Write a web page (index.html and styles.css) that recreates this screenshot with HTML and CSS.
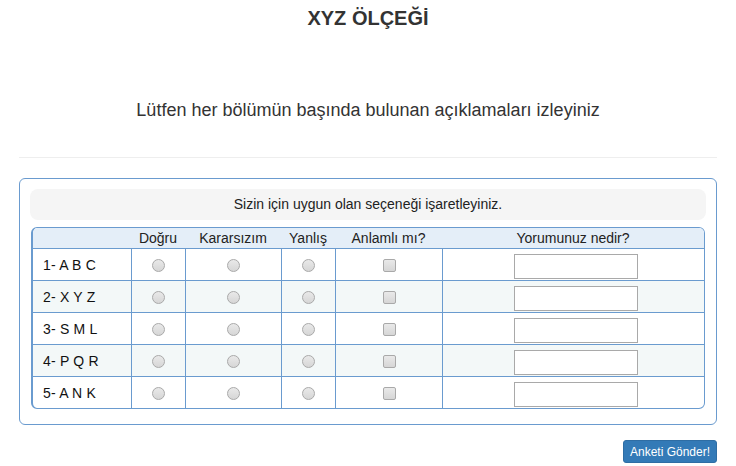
FILE: index.html
```html
<!DOCTYPE html>
<html lang="tr">
<head>
    <meta charset="UTF-8">
    <meta name="viewport" content="width=device-width, initial-scale=1.0">
    <title>XYZ Ölçeği</title>
    <link rel="stylesheet" href="styles.css">
</head>
<body>
    <div class="page">
        <h1 class="title">XYZ ÖLÇEĞİ</h1>
        <p class="intro">Lütfen her bölümün başında bulunan açıklamaları izleyiniz</p>
        <hr class="divider">

        <form class="survey">
            <div class="panel">
                <div class="panel-note">Sizin için uygun olan seçeneği işaretleyiniz.</div>
                <table class="scale">
                    <thead>
                        <tr>
                            <th class="col-label"></th>
                            <th class="col-dogru">Doğru</th>
                            <th class="col-kararsiz">Kararsızım</th>
                            <th class="col-yanlis">Yanlış</th>
                            <th class="col-anlamli">Anlamlı mı?</th>
                            <th class="col-yorum">Yorumunuz nedir?</th>
                        </tr>
                    </thead>
                    <tbody>
                        <tr>
                            <td class="item">1- A B C</td>
                            <td><input type="radio" name="s1"></td>
                            <td><input type="radio" name="s1"></td>
                            <td><input type="radio" name="s1"></td>
                            <td><input type="checkbox"></td>
                            <td class="comment"><input type="text"></td>
                        </tr>
                        <tr>
                            <td class="item">2- X Y Z</td>
                            <td><input type="radio" name="s2"></td>
                            <td><input type="radio" name="s2"></td>
                            <td><input type="radio" name="s2"></td>
                            <td><input type="checkbox"></td>
                            <td class="comment"><input type="text"></td>
                        </tr>
                        <tr>
                            <td class="item">3- S M L</td>
                            <td><input type="radio" name="s3"></td>
                            <td><input type="radio" name="s3"></td>
                            <td><input type="radio" name="s3"></td>
                            <td><input type="checkbox"></td>
                            <td class="comment"><input type="text"></td>
                        </tr>
                        <tr>
                            <td class="item">4- P Q R</td>
                            <td><input type="radio" name="s4"></td>
                            <td><input type="radio" name="s4"></td>
                            <td><input type="radio" name="s4"></td>
                            <td><input type="checkbox"></td>
                            <td class="comment"><input type="text"></td>
                        </tr>
                        <tr>
                            <td class="item">5- A N K</td>
                            <td><input type="radio" name="s5"></td>
                            <td><input type="radio" name="s5"></td>
                            <td><input type="radio" name="s5"></td>
                            <td><input type="checkbox"></td>
                            <td class="comment"><input type="text"></td>
                        </tr>
                    </tbody>
                </table>
            </div>

            <div class="actions">
                <button type="submit" class="send">Anketi Gönder!</button>
            </div>
        </form>
    </div>
</body>
</html>
```

FILE: styles.css
```css
body {
    font-family: 'Liberation Sans', Arial, sans-serif;
    color: #333;
    background-color: #ffffff;
    margin: 0;
    padding: 0;
}

.page {
    padding: 0 19px;
}

.title {
    margin: 0;
    padding-top: 7px;
    font-size: 20px;
    font-weight: bold;
    line-height: 22px;
    text-align: center;
    color: #333;
}

.intro {
    margin: 0;
    padding-top: 70px;
    font-size: 18px;
    line-height: 22px;
    text-align: center;
    color: #333;
}

.divider {
    margin: 36px 0 20px;
    border: 0;
    border-top: 1px solid #eeeeee;
}

.panel {
    border: 1px solid #6a9bcf;
    border-radius: 6px;
    padding: 10px 10px 15px;
}

.panel-note {
    background-color: #f5f5f5;
    border-radius: 8px;
    height: 31px;
    line-height: 31px;
    font-size: 14px;
    color: #222;
    text-align: center;
    margin-bottom: 7px;
}

.scale {
    width: calc(100% - 2px);
    margin: 0 1px;
    table-layout: fixed;
    border-collapse: separate;
    border-spacing: 0;
    border: 1px solid #6a9bcf;
    border-left-width: 2px;
    border-radius: 6px;
    font-size: 14px;
    color: #222;
}

.scale th {
    background-color: #e4eef8;
    font-weight: normal;
    height: 20px;
    padding: 0;
    line-height: 20px;
    text-align: center;
}

.scale th:first-child {
    border-top-left-radius: 5px;
}

.scale th:last-child {
    border-top-right-radius: 5px;
}

.col-label { width: 98px; }
.col-dogru { width: 54px; }
.col-kararsiz { width: 96px; }
.col-yanlis { width: 54px; }
.col-anlamli { width: 107px; }

.scale td {
    border-top: 1px solid #6a9bcf;
    border-left: 1px solid #6a9bcf;
    height: 31px;
    padding: 0;
    text-align: center;
    vertical-align: middle;
}

.scale td:first-child {
    border-left: 0;
}

.scale tbody tr:nth-child(even) td {
    background-color: #f3f8f8;
}

.scale td.item {
    text-align: left;
    padding-left: 10px;
    color: #111;
    letter-spacing: 0.2px;
}

.scale td.comment {
    vertical-align: top;
}

.scale input[type="radio"],
.scale input[type="checkbox"] {
    appearance: none;
    -webkit-appearance: none;
    width: 13px;
    height: 13px;
    margin: 0;
    vertical-align: middle;
    border: 1px solid #a9a9a9;
    background: linear-gradient(#e9e9e9, #d6d6d6);
}

.scale input[type="radio"] {
    border-radius: 50%;
}

.scale input[type="checkbox"] {
    border-radius: 2px;
}

.scale input[type="text"] {
    display: block;
    box-sizing: border-box;
    width: 124px;
    height: 25px;
    margin: 5px 0 0 71px;
    border: 1px solid #a9a9a9;
    padding: 2px 4px;
    font-size: 13px;
    background: #fff;
}

.actions {
    display: flex;
    justify-content: flex-end;
    margin-top: 15px;
}

.send {
    font-family: 'Liberation Sans', Arial, sans-serif;
    background-color: #337ab7;
    border: 1px solid #2e6da4;
    border-radius: 3px;
    color: #ffffff;
    font-size: 12px;
    height: 23px;
    padding: 0 6px;
    cursor: pointer;
}
```
